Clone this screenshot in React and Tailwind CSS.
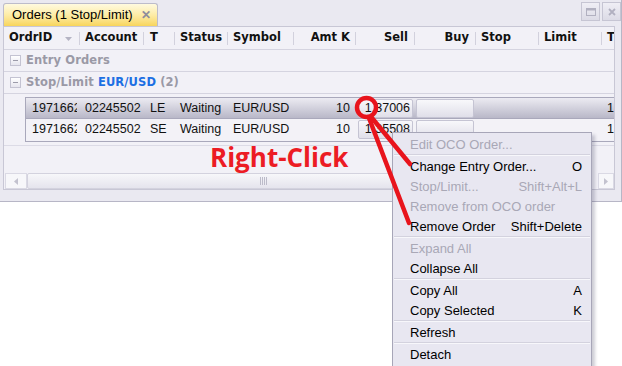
import React from 'react'

// header columns, widths follow the grid separators
const HEADERS = [
  { label: 'OrdrID', w: 'w-[75px]', arrow: true },
  { label: 'Account', w: 'w-[64px]' },
  { label: 'T', w: 'w-[31px]' },
  { label: 'Status', w: 'w-[53px]' },
  { label: 'Symbol', w: 'w-[66px]' },
  { label: 'Amt K', w: 'w-[62px]', right: 'pr-[5px]' },
  { label: 'Sell', w: 'w-[59px]', right: 'pr-[6px]' },
  { label: 'Buy', w: 'w-[61px]', right: 'pr-[6px]' },
  { label: 'Stop', w: 'w-[63px]' },
  { label: 'Limit', w: 'w-[63px]' },
  { label: 'T', w: 'w-[13px]' },
]

const ORDERS = [
  { id: '19716621', account: '02245502', type: 'LE', status: 'Waiting', symbol: 'EUR/USD', amt: '10', sell: '1,37006', t: '1', selected: true },
  { id: '19716622', account: '02245502', type: 'SE', status: 'Waiting', symbol: 'EUR/USD', amt: '10', sell: '1,35508', t: '1' },
]

const MENU = [
  { label: 'Edit OCO Order...', disabled: true },
  'sep',
  { label: 'Change Entry Order...', key: 'O' },
  { label: 'Stop/Limit...', key: 'Shift+Alt+L', disabled: true },
  { label: 'Remove from OCO order', disabled: true },
  { label: 'Remove Order', key: 'Shift+Delete' },
  'sep',
  { label: 'Expand All', disabled: true },
  { label: 'Collapse All' },
  'sep',
  { label: 'Copy All', key: 'A' },
  { label: 'Copy Selected', key: 'K' },
  'sep',
  { label: 'Refresh' },
  'sep',
  { label: 'Detach' },
]

function MinusBox() {
  return (
    <div className="w-[11px] h-[11px] border border-[#c4c3d2] bg-gradient-to-b from-white to-[#e6e5ee] flex items-center justify-center shrink-0">
      <div className="w-[5px] h-px bg-[#9c9baa]" />
    </div>
  )
}

function PriceButton({ children, w }) {
  return (
    <div className={`${w} h-[19px] rounded-[2px] border border-[#c5c4d3] bg-gradient-to-b from-[#f8f8fb] to-[#e0dfe9] flex items-center justify-end pr-[2px]`}>
      {children}
    </div>
  )
}

function OrderRow({ o }) {
  return (
    <div
      className={`h-[21px] flex items-center text-[12.5px] text-[#111] ${
        o.selected ? 'bg-gradient-to-b from-[#ecebf2] to-[#b9b8c8] border-b border-[#a9a8bb]' : 'bg-[#f3f2f7]'
      }`}
    >
      <div className="w-[53px] pl-[6px] pr-[2px] shrink-0">
        <div className="overflow-hidden whitespace-nowrap">{o.id}</div>
      </div>
      <div className="w-[64px] pl-[6px] shrink-0">{o.account}</div>
      <div className="w-[31px] pl-[7px] shrink-0">{o.type}</div>
      <div className="w-[53px] pl-[6px] shrink-0">{o.status}</div>
      <div className="w-[66px] pl-[6px] shrink-0">{o.symbol}</div>
      <div className="w-[62px] pr-[5px] text-right shrink-0">{o.amt}</div>
      <div className="w-[59px] pl-[3px] shrink-0">
        <PriceButton w="w-[55px]">{o.sell}</PriceButton>
      </div>
      <div className="w-[61px] pl-[2px] shrink-0">
        <PriceButton w="w-[58px]" />
      </div>
      <div className="w-[63px] shrink-0" />
      <div className="w-[63px] shrink-0" />
      <div className="w-[13px] pl-[6px] shrink-0">{o.t}</div>
    </div>
  )
}

export default function App() {
  return (
    <div className="relative w-[622px] h-[366px] overflow-hidden bg-white font-['Liberation_Sans',Arial,sans-serif]">
      {/* window */}
      <div className="w-[622px] h-[202px] bg-[#eae9f1] border-r border-b border-[#b7b6c6] flex flex-col">
        {/* tab strip */}
        <div className="h-[26px] flex justify-between pl-[3px] shrink-0">
          <div className="self-end h-[23px] w-[155px] rounded-t-[3px] border border-b-0 border-[#bdbcca] bg-gradient-to-b from-[#fffadf] via-[#fdeca6] to-[#f8d55a] flex items-center pl-[8px] text-[13px] text-black">
            <span>Orders (1 Stop/Limit)</span>
            <span className="ml-[8px] text-[12px] font-bold text-[#8e8d9c] leading-none">✕</span>
          </div>
          <div className="flex gap-[2px] mt-[2px]">
            <div className="w-[19px] h-[19px] border border-[#c6c5d3] bg-gradient-to-b from-[#efeef5] to-[#dcdbe6] flex items-center justify-center">
              <svg width="10" height="8" viewBox="0 0 10 8">
                <rect x="0.5" y="0.5" width="9" height="7" fill="none" stroke="#b1b0c0" />
                <rect x="0.5" y="0.5" width="9" height="2" fill="#b1b0c0" />
              </svg>
            </div>
            <div className="w-[19px] h-[19px] border border-[#c6c5d3] bg-gradient-to-b from-[#efeef5] to-[#dcdbe6] flex items-center justify-center">
              <svg width="8" height="8" viewBox="0 0 8 8">
                <path d="M1 1 L7 7 M7 1 L1 7" stroke="#b1b0c0" strokeWidth="1.8" />
              </svg>
            </div>
          </div>
        </div>

        {/* panel */}
        <div className="ml-[3px] w-[612px] h-[164px] border border-[#c8c7d5] bg-[#f2f1f7] flex flex-col shrink-0">
          {/* header */}
          <div className="h-[23px] border-b border-[#d5d4e0] flex font-['DejaVu_Sans',sans-serif] font-bold text-[11.5px] text-[#111] shrink-0">
            {HEADERS.map((h, i) => (
              <div key={i} className={`${h.w} flex items-center shrink-0 overflow-hidden`}>
                {i > 0 && <div className="w-px h-[13px] bg-[#d2d1dd] shrink-0" />}
                <div
                  className={`flex-1 flex items-center whitespace-nowrap ${
                    h.right ? `justify-end ${h.right}` : i === 2 ? 'pl-[6px]' : 'pl-[5px]'
                  }`}
                >
                  {h.label}
                  {h.arrow && (
                    <svg className="ml-[13px] mt-[1px]" width="7" height="4" viewBox="0 0 7 4">
                      <path d="M0 0 H7 L3.5 4 Z" fill="#b4b3c3" />
                    </svg>
                  )}
                </div>
              </div>
            ))}
          </div>

          {/* group rows */}
          <div className="h-[22px] border-b border-[#d5d4e0] flex items-center pl-[6px] shrink-0">
            <MinusBox />
            <span className="ml-[5px] font-['DejaVu_Sans',sans-serif] font-bold text-[11.5px] tracking-[0.1px] text-[#9a99a6]">Entry Orders</span>
          </div>
          <div className="h-[22px] border-b border-[#d5d4e0] flex items-center pl-[6px] shrink-0">
            <MinusBox />
            <span className="ml-[5px] font-['DejaVu_Sans',sans-serif] font-bold text-[11.5px] tracking-[0.1px] text-[#9a99a6]">
              Stop/Limit <span className="text-[#1c6fe3]">EUR/USD</span> (2)
            </span>
          </div>

          {/* orders */}
          <div className="h-[52px] pt-[3px] pl-[21px] border-b border-[#dcdbe6] shrink-0">
            <div className="h-[45px] border-l border-t border-b border-[#a9a8bb] flex flex-col">
              {ORDERS.map((o) => (
                <OrderRow key={o.id} o={o} />
              ))}
            </div>
          </div>

          <div className="h-[27px] shrink-0" />

          {/* horizontal scroll bar */}
          <div className="h-[16px] pl-[1px] flex shrink-0">
            <div className="w-[22px] h-full border border-[#dad9e4] bg-[#f7f7fa] flex items-center justify-center">
              <svg width="4" height="7" viewBox="0 0 4 7">
                <path d="M4 0 V7 L0 3.5 Z" fill="#c3c2cf" />
              </svg>
            </div>
            <div className="flex-1 flex">
              <div className="w-[472px] h-full rounded-[2px] border border-[#d3d2de] bg-gradient-to-b from-[#f7f7fa] to-[#e5e4ed] flex items-center justify-center">
                <div className="flex gap-[1px]">
                  <div className="w-px h-[8px] bg-[#bcbbc9]" />
                  <div className="w-px h-[8px] bg-[#bcbbc9]" />
                  <div className="w-px h-[8px] bg-[#bcbbc9]" />
                  <div className="w-px h-[8px] bg-[#bcbbc9]" />
                </div>
              </div>
              <div className="flex-1" />
            </div>
            <div className="w-[16px] h-full border border-[#dad9e4] bg-[#f7f7fa] flex items-center justify-center">
              <svg width="4" height="7" viewBox="0 0 4 7">
                <path d="M0 0 V7 L4 3.5 Z" fill="#c3c2cf" />
              </svg>
            </div>
          </div>
        </div>
      </div>

      {/* annotation text */}
      <div className="absolute left-[210px] top-[144px] font-['Open_Sans',sans-serif] font-bold text-[26px] leading-none text-[#ec1c24]">
        Right-Click
      </div>

      {/* context menu */}
      <div className="absolute left-[392px] top-[132px] w-[200px] border border-[#a7a6b8] bg-[#e8e7f1] pt-[1px] pb-[4px] shadow-[3px_3px_3px_rgba(60,60,90,0.25)] text-[13px]">
        {MENU.map((m, i) =>
          m === 'sep' ? (
            <div key={i} className="mx-px h-[2px] border-t border-[#d3d2de] border-b border-b-[#f7f7fb]" />
          ) : (
            <div
              key={i}
              className={`h-[20px] flex items-center justify-between pt-[1px] pl-[17px] pr-[9px] whitespace-nowrap ${
                m.disabled ? 'text-[#a9a8b6]' : 'text-black'
              }`}
            >
              <span>{m.label}</span>
              {m.key && <span>{m.key}</span>}
            </div>
          )
        )}
      </div>

      {/* red circle + pointer lines */}
      <svg className="absolute left-0 top-0 pointer-events-none" width="622" height="366" viewBox="0 0 622 366">
        <g stroke="#e8141c" strokeWidth="4.5" fill="none" strokeLinecap="round">
          <circle cx="366.5" cy="107.5" r="9.5" />
          <path d="M372 118 L410 164" />
          <path d="M369 118 L409 223" />
        </g>
      </svg>
    </div>
  )
}
